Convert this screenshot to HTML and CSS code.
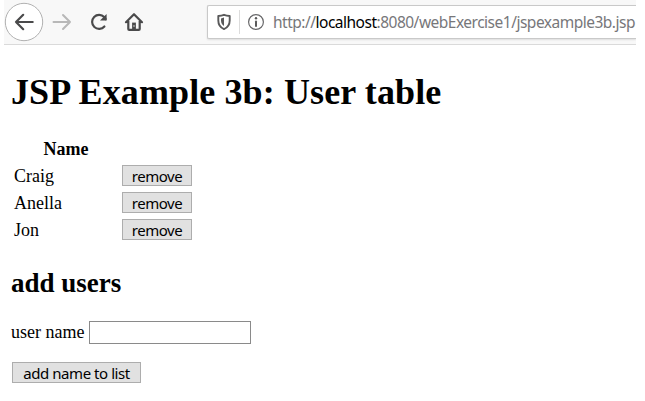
FILE: index.html
```html
<!DOCTYPE html>
<html lang="en">
<head>
<meta charset="utf-8">
<title>JSP Example 3b</title>
<link rel="stylesheet" href="styles.css">
</head>
<body>
<header class="toolbar">
  <button class="nav back" aria-label="Back"><svg width="40" height="40" viewBox="0 0 40 40"><circle cx="20" cy="20" r="18.7" fill="#fff" stroke="#b1b1b1"/><path d="M28.700 20H12M19.200 12.800 12 20l7.200 7.200" fill="none" stroke="#4a4a4b" stroke-width="2.200" stroke-linecap="round" stroke-linejoin="round"/></svg></button>
  <button class="nav forward" aria-label="Forward"><svg width="20" height="20" viewBox="0 0 20 20"><path d="M1.500 10H18M11 3l7 7-7 7" fill="none" stroke="#b8b8b8" stroke-width="2" stroke-linecap="round" stroke-linejoin="round"/></svg></button>
  <button class="nav reload" aria-label="Reload"><svg width="20" height="20" viewBox="0 0 20 20"><path d="M15.400 14.500A7 7 0 1 1 15.200 5.100L16.600 7" fill="none" stroke="#4a4a4b" stroke-width="2.200" stroke-linecap="round"/><path d="M17.600 2v6.600H11z" fill="#4a4a4b"/></svg></button>
  <button class="nav home" aria-label="Home"><svg width="20" height="20" viewBox="0 0 20 20"><path d="M2 10.200 10 2.200l8 8M4.300 9v7.900q0 .9.9.9h9.600q.9 0 .9-.9V9" fill="none" stroke="#4a4a4b" stroke-width="2.200" stroke-linecap="round" stroke-linejoin="round"/><path d="M8.100 10.600h3.800V17H8.100z" fill="#4a4a4b"/><path d="M10 13v2" stroke="#ccc"/></svg></button>
  <div class="address">
    <svg class="shield" width="16" height="18" viewBox="0 0 16 18"><path d="M8 1.800c2 .8 3.800 1.100 5.700 1.200v4.500c0 4-2 7-5.700 8.600C4.300 14.500 2.300 11.500 2.300 7.500V3C4.200 2.900 6 2.600 8 1.800z" fill="none" stroke="#59595a" stroke-width="1.900" stroke-linejoin="round"/><path d="M8 4.600v8.500C6.100 11.800 5 9.900 5 7.500V5.400z" fill="#59595a"/></svg>
    <span class="divider"></span>
    <svg class="info" width="18" height="18" viewBox="0 0 18 18"><circle cx="9" cy="9" r="7.400" fill="none" stroke="#68686a" stroke-width="1.200"/><circle cx="9" cy="5.300" r="1.200" fill="#59595a"/><path d="M9 8.400v4.500" stroke="#59595a" stroke-width="2" stroke-linecap="round"/></svg>
    <span class="url">http://<b>localhost</b>:8080/webExercise1/jspexample3b.jsp</span>
  </div>
</header>
<main>
  <h1>JSP Example 3b: User table</h1>
  <table>
    <tr><th>Name</th><th></th></tr>
    <tr><td>Craig</td><td><button class="action">remove</button></td></tr>
    <tr><td>Anella</td><td><button class="action">remove</button></td></tr>
    <tr><td>Jon</td><td><button class="action">remove</button></td></tr>
  </table>
  <h2>add users</h2>
  <form>
    <div class="field"><label for="user">user name</label><input id="user" type="text"></div>
    <button class="action add" type="button">add name to list</button>
  </form>
</main>
</body>
</html>
```
FILE: styles.css
```css
* { box-sizing: border-box; }
body {
  margin: 0;
  background: #fff;
  color: #000;
  font: 18px/20px "Liberation Serif", serif;
  overflow: hidden;
}
.toolbar {
  display: flex;
  align-items: center;
  width: 632px;
  height: 45px;
  margin-left: 4px;
  padding-bottom: 1px;
  background: #f8f8f8;
  border-bottom: 1px solid #dadada;
}
.nav {
  padding: 0;
  border: 0;
  background: none;
  line-height: 0;
}
.back { margin-left: 0; }
.forward { margin-left: 8px; }
.reload { margin-left: 17px; }
.home { margin-left: 15px; }
.address {
  display: flex;
  align-items: center;
  flex: 1;
  min-width: 0;
  height: 34px;
  margin-left: 63px;
  padding-left: 8px;
  background: #fff;
  border: 1px solid #c9c9c9;
  border-right: 0;
  border-radius: 2px 0 0 2px;
  box-shadow: 0 1px 2px #ddd;
  clip-path: inset(-3px 0 -3px -3px);
  white-space: nowrap;
}
.address svg { flex: none; }
.divider {
  flex: none;
  width: 1px;
  height: 24px;
  margin: 0 7px;
  background: #dcdcdc;
}
.url {
  margin-left: 8px;
  color: #77777a;
  font: 15.5px/24px "Noto Sans", sans-serif;
  letter-spacing: -0.5px;
}
.url b { color: #000; font-weight: 400; }
main { padding: 26px 0 0 11px; }
h1 {
  margin: 0;
  font-size: 36px;
  line-height: 42px;
  letter-spacing: 0.12px;
}
table {
  margin: 22px 0 0 1px;
  border-spacing: 0;
}
tr { height: 27px; }
th, td { padding: 0; }
th:first-child { width: 110px; padding-right: 2px; }
td:first-child { padding-left: 2px; }
.action {
  display: block;
  width: 70px;
  height: 21px;
  padding: 1px 0 0;
  border: 1px solid #adadad;
  background: #e1e1e1;
  color: #000;
  font: 15px/19px "Noto Sans", sans-serif;
  letter-spacing: -0.45px;
}
h2 {
  margin: 24px 0 0;
  font-size: 27px;
  line-height: 32px;
}
.field {
  display: flex;
  align-items: center;
  gap: 5px;
  height: 24px;
  margin-top: 21px;
}
input {
  width: 162px;
  height: 23px;
  padding: 0;
  border: 1px solid #8a8a8a;
  background: #fff;
}
.add { width: 129px; margin: 18px 0 0 1px; }
```
